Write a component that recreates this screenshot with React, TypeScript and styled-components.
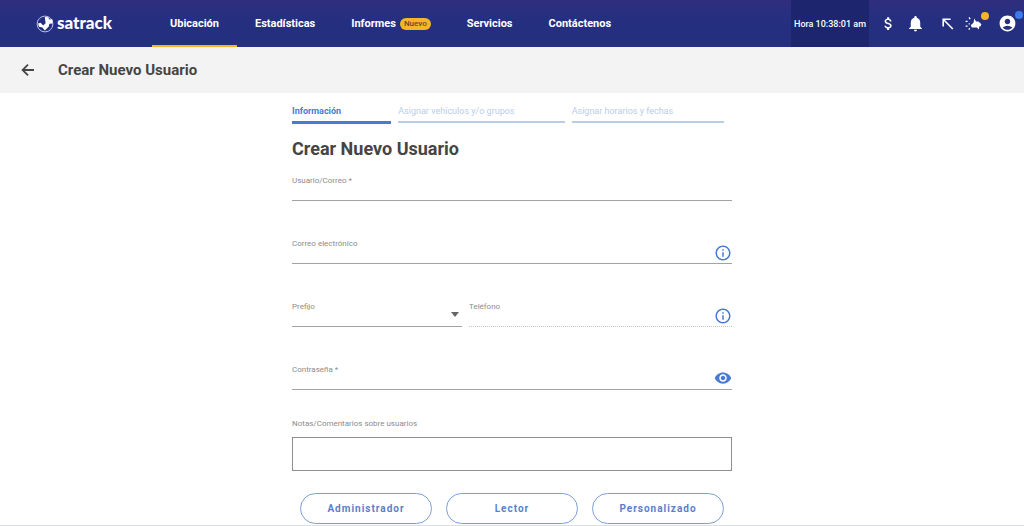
import React from "react";
import styled, { createGlobalStyle } from "styled-components";
import {
  MdAccountCircle,
  MdAttachMoney,
  MdInfoOutline,
  MdNotifications,
  MdVisibility,
} from "react-icons/md";

const color = {
  navy: "#252f80",
  navyTop: "#312e7e",
  clock: "#1c256d",
  amber: "#f6b426",
  blue: "#4a7bd0",
  paleBlue: "#b9cde9",
  ink: "#454545",
  label: "#8c8c8c",
  line: "#a3a3a3",
};

const GlobalStyle = createGlobalStyle`
  *, *::before, *::after { box-sizing: border-box; }
  body {
    margin: 0;
    background: #fff;
    color: ${color.ink};
    font-family: Roboto, "Liberation Sans", sans-serif;
  }
  button, input, select, textarea { font: inherit; color: inherit; }
`;

const Header = styled.header`
  display: flex;
  align-items: stretch;
  justify-content: space-between;
  height: 47px;
  color: #fff;
  background: linear-gradient(${color.navyTop}, ${color.navy} 40%);
`;

const HeaderStart = styled.div`
  display: flex;
`;

const Brand = styled.a`
  display: flex;
  align-items: center;
  gap: 3px;
  width: 152px;
  padding-left: 36px;
  color: inherit;
  text-decoration: none;
`;

const Wordmark = styled.span`
  padding-bottom: 2px;
  font-family: Lato, "Liberation Sans", sans-serif;
  font-size: 17px;
  font-weight: 900;
  line-height: 22px;
`;

const Nav = styled.nav`
  display: flex;
`;

const NavLink = styled.a<{ $active?: boolean }>`
  display: flex;
  align-items: center;
  gap: 4px;
  padding: 2px 18px 0;
  border-bottom: 2px solid ${(p) => (p.$active ? color.amber : "transparent")};
  color: inherit;
  font-size: 11px;
  font-weight: 700;
  line-height: 16px;
  text-decoration: none;
`;

const NewTag = styled.span`
  padding: 0 4px;
  border-radius: 6px;
  background: ${color.amber};
  color: #5d4a34;
  font-size: 8px;
  font-weight: 500;
  line-height: 12px;
`;

const HeaderEnd = styled.div`
  display: flex;
  align-items: stretch;
`;

const Clock = styled.time`
  display: flex;
  align-items: center;
  justify-content: center;
  width: 78px;
  background: ${color.clock};
  font-size: 9px;
  font-weight: 500;
  white-space: nowrap;
`;

const Actions = styled.div`
  display: flex;
  align-items: center;
  gap: 15px;
  padding: 0 7px 0 11px;
`;

const ActionGroup = styled.div`
  display: flex;
  align-items: center;
  gap: 9px;
`;

const IconButton = styled.button<{ $dot?: string }>`
  position: relative;
  display: flex;
  padding: 0;
  border: 0;
  background: none;
  cursor: pointer;

  &::after {
    content: "";
    display: ${(p) => (p.$dot ? "block" : "none")};
    position: absolute;
    top: -3px;
    right: -6px;
    width: 8px;
    height: 8px;
    border-radius: 50%;
    background: ${(p) => p.$dot};
  }
`;

const TitleBar = styled.div`
  display: flex;
  align-items: center;
  gap: 22px;
  height: 46px;
  padding-left: 20px;
  background: #f3f3f3;
`;

const PageTitle = styled.h1`
  margin: 0;
  font-size: 15px;
  font-weight: 700;
  line-height: 20px;
`;

const Main = styled.main`
  padding: 12px 16px 1px;
  border-bottom: 1px solid #dcdfe3;
`;

const Form = styled.form`
  max-width: 440px;
  margin: 0 auto;
`;

const Steps = styled.div`
  display: flex;
  gap: 7px;
  padding-right: 8px;
`;

const Step = styled.button<{ $active?: boolean; $grow: number }>`
  flex: ${(p) => p.$grow} 1 0;
  align-self: flex-start;
  padding: 0 0 4px;
  border: 0;
  border-bottom: ${(p) => (p.$active ? 3 : 2)}px solid ${(p) => (p.$active ? color.blue : color.paleBlue)};
  background: none;
  color: ${(p) => (p.$active ? color.blue : color.paleBlue)};
  font-size: 9px;
  font-weight: ${(p) => (p.$active ? 700 : 400)};
  line-height: 12px;
  text-align: left;
  white-space: nowrap;
`;

const FormTitle = styled.h2`
  margin: 13px 0 15px;
  font-size: 18px;
  font-weight: 700;
  line-height: 24px;
`;

const Row = styled.div`
  display: flex;
  gap: 7px;
  margin-bottom: 38px;
`;

const Field = styled.div<{ $grow?: number; $dotted?: boolean }>`
  flex: ${(p) => p.$grow ?? 1} 1 0;
  display: grid;
  grid-template-columns: 1fr auto;
  grid-template-rows: 10px 14px;
  min-width: 0;
  border-bottom: 1px ${(p) => (p.$dotted ? "dotted" : "solid")} ${(p) => (p.$dotted ? "#c4c4c4" : color.line)};
`;

const Label = styled.label`
  display: block;
  color: ${color.label};
  font-size: 8px;
  line-height: 10px;
`;

const Input = styled.input`
  min-width: 0;
  padding: 0;
  border: 0;
  outline: 0;
  background: none;
  font-size: 11px;
`;

const Select = styled.select`
  appearance: none;
  min-width: 0;
  padding: 0;
  border: 0;
  outline: 0;
  background: none;
  font-size: 11px;
`;

const Adornment = styled.span`
  grid-column: 2;
  grid-row: 1 / 3;
  align-self: end;
  display: flex;
  padding-bottom: 1px;
  color: ${color.blue};
`;

const RevealButton = styled.button`
  grid-column: 2;
  grid-row: 1 / 3;
  align-self: end;
  display: flex;
  padding: 0 0 2px;
  border: 0;
  background: none;
  color: ${color.blue};
  cursor: pointer;
`;

const Caret = styled.svg`
  grid-column: 2;
  grid-row: 2;
  margin: 0 2px;
  fill: #666;
`;

const Notes = styled.div`
  margin-top: -9px;
`;

const TextArea = styled.textarea`
  display: block;
  width: 100%;
  height: 34px;
  margin-top: 8px;
  padding: 4px 8px;
  border: 1px solid #8f8f8f;
  outline: 0;
  resize: none;
  font-size: 11px;
`;

const Roles = styled.div`
  display: flex;
  gap: 14px;
  margin-top: 22px;
  padding: 0 8px;
`;

const RoleButton = styled.button`
  flex: 1;
  height: 31px;
  padding: 0;
  border: 1px solid #7c9fd6;
  border-radius: 16px;
  background: #fff;
  color: #587fce;
  font-size: 10px;
  font-weight: 700;
  letter-spacing: 1px;
`;

const LogoMark = () => (
  <svg width="18" height="20" viewBox="0 0 18 20" aria-hidden="true">
    <circle cx="9" cy="10" r="7.9" fill="none" stroke="#b9bfe4" strokeWidth="1" />
    <path
      fill="#fff"
      d="M8.8 3 12.4 3.2 13 5.2 16.6 5.6 16.4 9.4 13.4 9.8 12.8 12.4 8.8 16.4 6.4 13.6 3 12.8 2 9.6 4.6 8.8 7.2 11.6 9.6 9.2Z"
    />
  </svg>
);

const Announcement = () => (
  <svg width="18" height="18" viewBox="0 0 18 18" aria-hidden="true">
    <path
      fill="none"
      stroke="#fff"
      strokeWidth="1.3"
      d="M.6 6.4h2M.6 11.2h2M4 2.4l1.2 1.8M3.8 14.6l1-1.4M3.6 8.8h1.2"
    />
    <path
      fill="#fff"
      d="M9.2 3.4 11 6.4 13.4 6.6 16.4 9.2 15.4 11.4 14.2 11.4 14 14.6 11.8 12.6 6.8 12.4 5.8 10.2 8.6 7.6Z"
    />
  </svg>
);

const BackArrow = () => (
  <svg width="16" height="16" viewBox="0 0 16 16" fill="none" stroke="currentColor" strokeWidth="1.8" aria-hidden="true">
    <path d="M14 8H3.2M8 2.6 2.6 8 8 13.4" />
  </svg>
);

const CornerArrow = () => (
  <svg width="16" height="16" viewBox="0 0 16 16" fill="none" stroke="currentColor" strokeWidth="1.6" aria-hidden="true">
    <path d="M3.2 10.4V3.2h7.4M3.2 3.2l9.6 9.8" />
  </svg>
);

const navItems = ["Ubicación", "Estadísticas", "Informes", "Servicios", "Contáctenos"];
const roles = ["Administrador", "Lector", "Personalizado"];

export default function App() {
  return (
    <>
      <GlobalStyle />
      <Header>
        <HeaderStart>
          <Brand href="#">
            <LogoMark />
            <Wordmark>satrack</Wordmark>
          </Brand>
          <Nav>
            {navItems.map((item, i) => (
              <NavLink key={item} href="#" $active={i === 0}>
                {item}
                {item === "Informes" && <NewTag>Nuevo</NewTag>}
              </NavLink>
            ))}
          </Nav>
        </HeaderStart>
        <HeaderEnd>
          <Clock>Hora 10:38:01 am</Clock>
          <Actions>
            <ActionGroup>
              <IconButton aria-label="Pagos">
                <MdAttachMoney size={17} />
              </IconButton>
              <IconButton aria-label="Notificaciones">
                <MdNotifications size={19} />
              </IconButton>
            </ActionGroup>
            <ActionGroup>
              <IconButton aria-label="Atajos">
                <CornerArrow />
              </IconButton>
              <IconButton aria-label="Novedades" $dot={color.amber}>
                <Announcement />
              </IconButton>
            </ActionGroup>
            <IconButton aria-label="Cuenta" $dot="#3d7bea">
              <MdAccountCircle size={19} />
            </IconButton>
          </Actions>
        </HeaderEnd>
      </Header>

      <TitleBar>
        <IconButton aria-label="Volver">
          <BackArrow />
        </IconButton>
        <PageTitle>Crear Nuevo Usuario</PageTitle>
      </TitleBar>

      <Main>
        <Form>
          <Steps>
            <Step type="button" $active $grow={99}>
              Información
            </Step>
            <Step type="button" $grow={166}>
              Asignar vehículos y/o grupos
            </Step>
            <Step type="button" $grow={152}>
              Asignar horarios y fechas
            </Step>
          </Steps>

          <FormTitle>Crear Nuevo Usuario</FormTitle>

          <Row>
            <Field>
              <Label htmlFor="user">Usuario/Correo *</Label>
              <Input id="user" />
            </Field>
          </Row>
          <Row>
            <Field>
              <Label htmlFor="email">Correo electrónico</Label>
              <Adornment>
                <MdInfoOutline size={18} />
              </Adornment>
              <Input id="email" type="email" />
            </Field>
          </Row>
          <Row>
            <Field $grow={170}>
              <Label htmlFor="prefix">Prefijo</Label>
              <Select id="prefix" defaultValue="">
                <option value="" />
              </Select>
              <Caret width="10" height="5" viewBox="0 0 10 5" aria-hidden="true">
                <path d="M1 0h8L5 5Z" />
              </Caret>
            </Field>
            <Field $grow={263} $dotted>
              <Label htmlFor="phone">Teléfono</Label>
              <Adornment>
                <MdInfoOutline size={18} />
              </Adornment>
              <Input id="phone" type="tel" disabled />
            </Field>
          </Row>
          <Row>
            <Field>
              <Label htmlFor="password">Contraseña *</Label>
              <RevealButton type="button" aria-label="Mostrar contraseña">
                <MdVisibility size={18} />
              </RevealButton>
              <Input id="password" type="password" />
            </Field>
          </Row>

          <Notes>
            <Label htmlFor="notes">Notas/Comentarios sobre usuarios</Label>
            <TextArea id="notes" />
          </Notes>

          <Roles>
            {roles.map((role) => (
              <RoleButton key={role} type="button">
                {role}
              </RoleButton>
            ))}
          </Roles>
        </Form>
      </Main>
    </>
  );
}
